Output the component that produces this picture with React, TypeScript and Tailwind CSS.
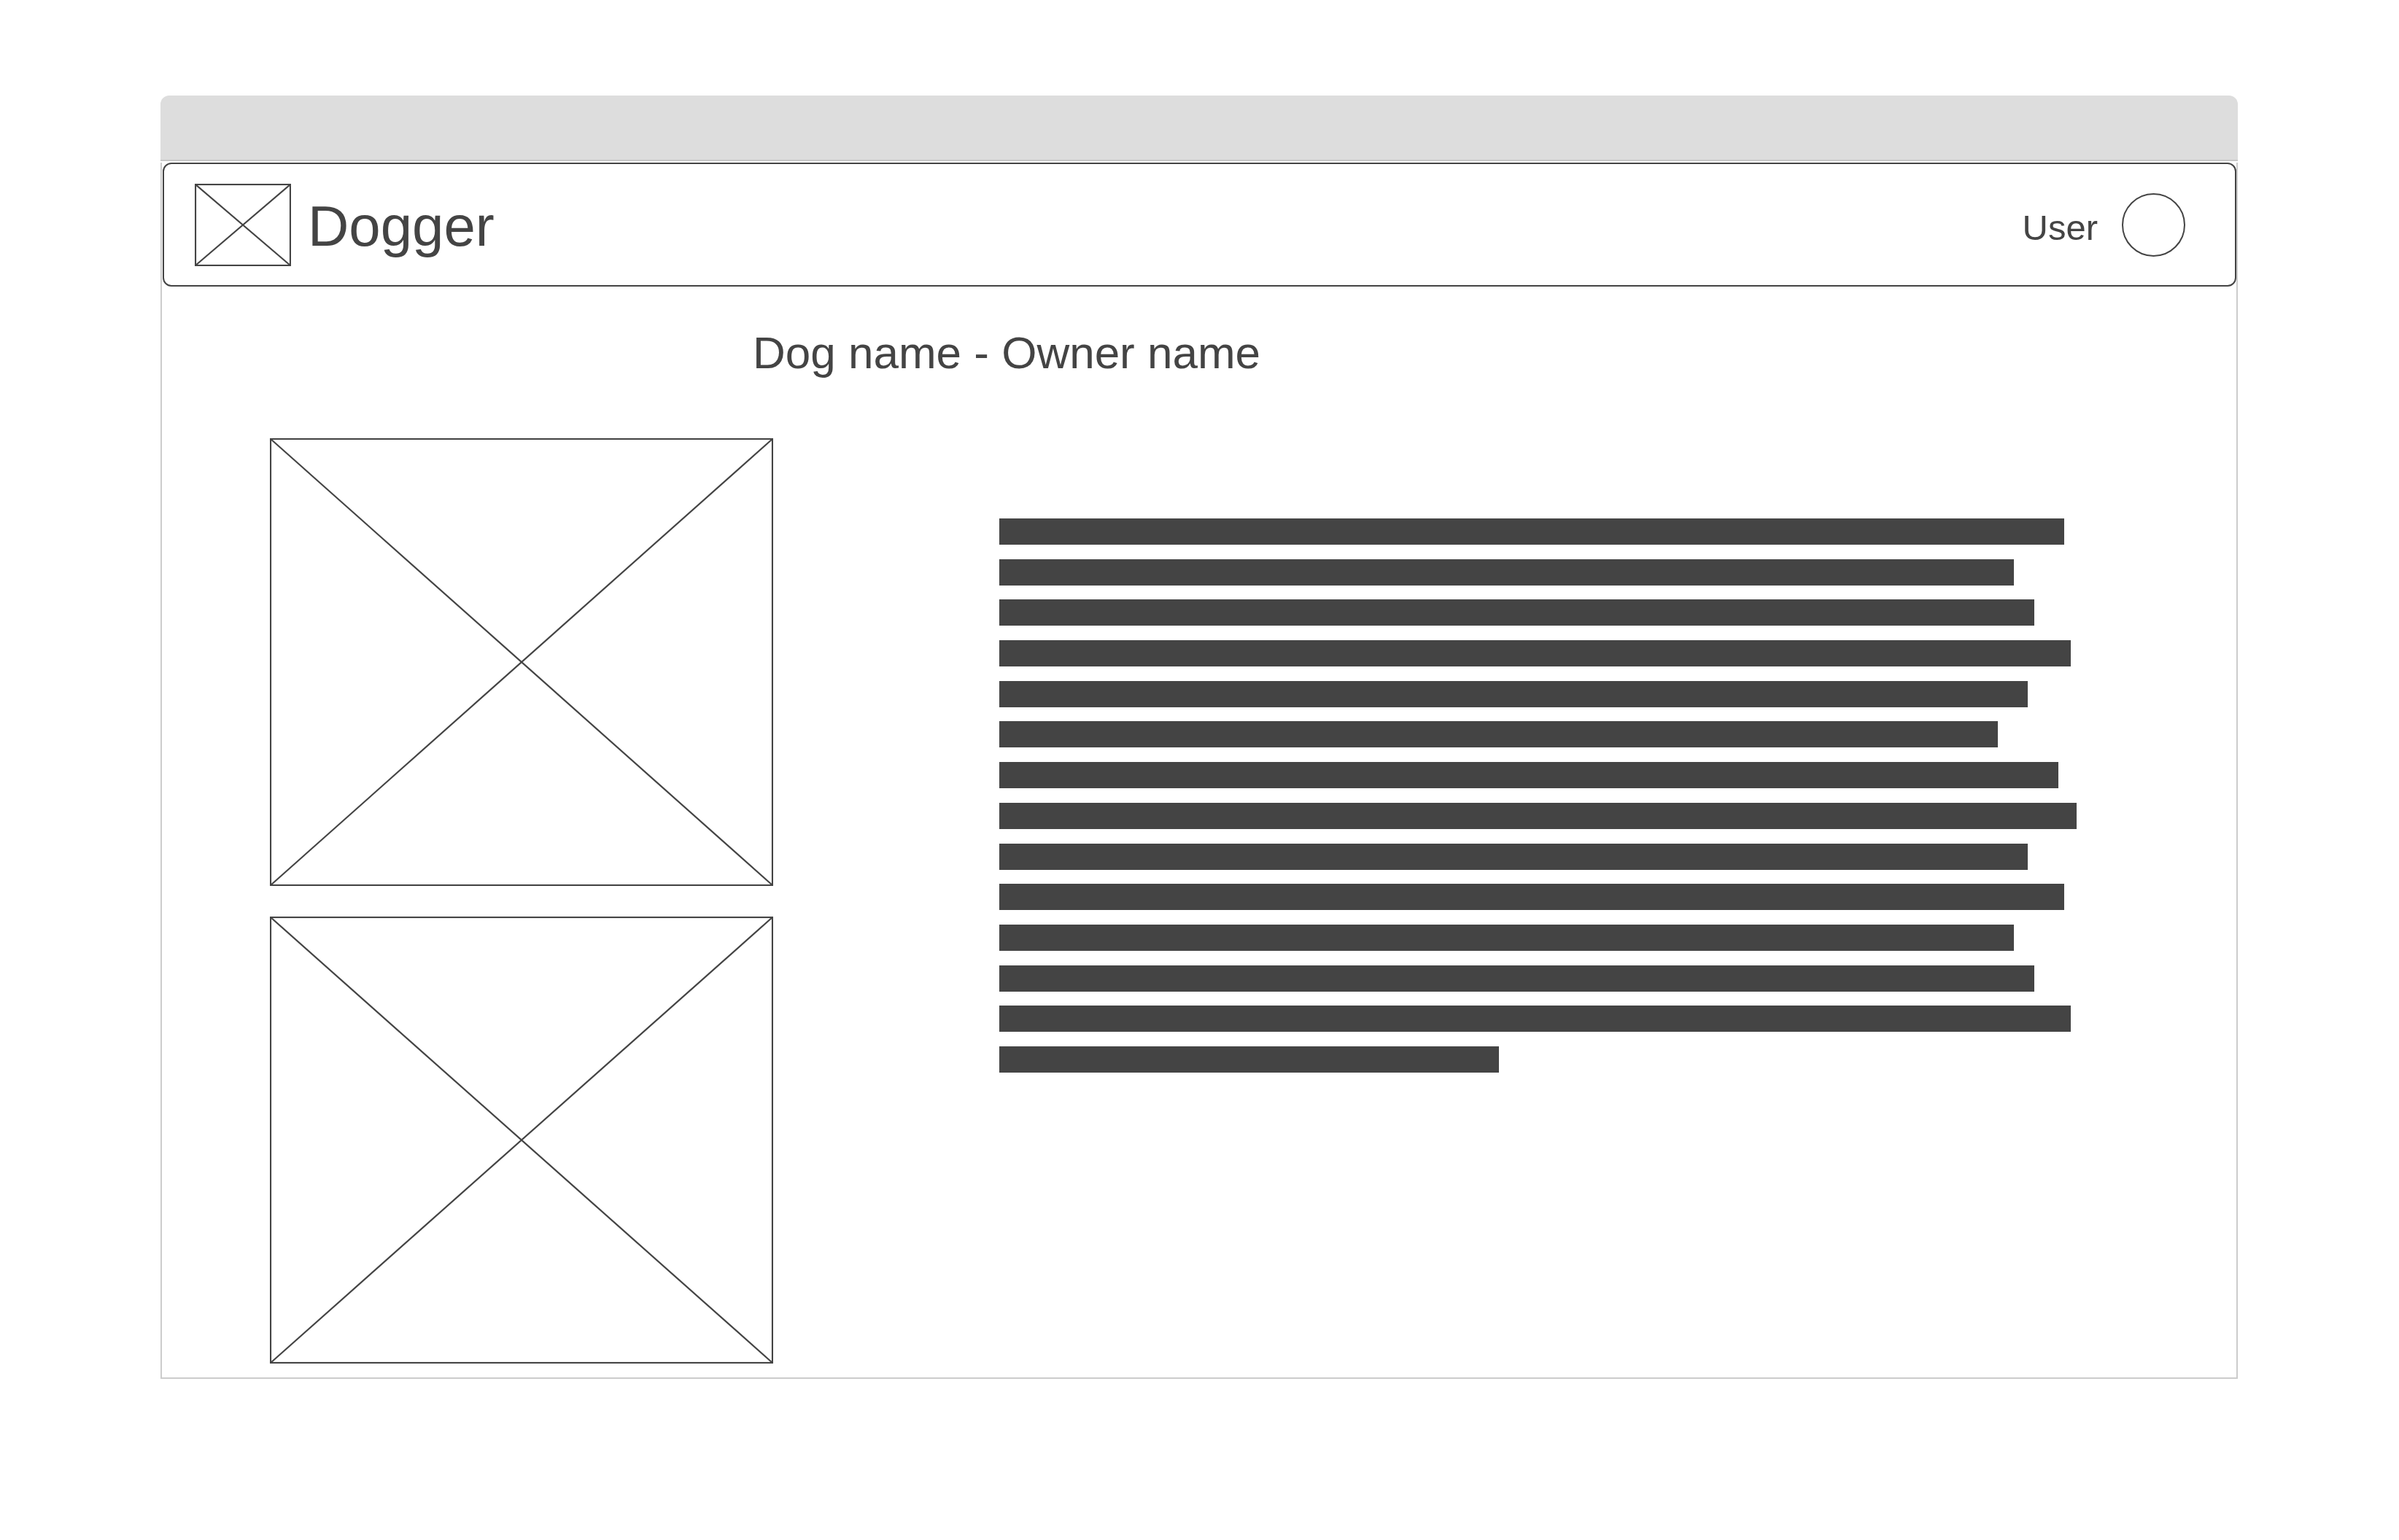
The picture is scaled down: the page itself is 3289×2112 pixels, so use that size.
import React from "react";

const textBars = [
  "w-[1460px]",
  "w-[1391px]",
  "w-[1419px]",
  "w-[1469px]",
  "w-[1410px]",
  "w-[1369px]",
  "w-[1452px]",
  "w-[1477px]",
  "w-[1410px]",
  "w-[1460px]",
  "w-[1391px]",
  "w-[1419px]",
  "w-[1469px]",
  "w-[685px]",
];

const Placeholder: React.FC<{ width: number; height: number }> = ({ width, height }) => (
  <svg width={width} height={height} viewBox={`0 0 ${width} ${height}`} className="block shrink-0">
    <rect x={1} y={1} width={width - 2} height={height - 2} fill="white" stroke="#444444" strokeWidth={2.2} />
    <line x1={1} y1={1} x2={width - 1} y2={height - 1} stroke="#444444" strokeWidth={2.2} />
    <line x1={width - 1} y1={1} x2={1} y2={height - 1} stroke="#444444" strokeWidth={2.2} />
  </svg>
);

const Header: React.FC = () => (
  <div className="mt-[2px] flex h-[170px] items-center justify-between rounded-[12px] border-2 border-[#444444] pl-[42px] pr-[68px]">
    <div className="flex items-center gap-[23px]">
      <Placeholder width={132} height={113} />
      <span className="mt-[4px] text-[78px] leading-none text-[#444444]">Dogger</span>
    </div>
    <div className="flex items-center gap-[33px]">
      <span className="mt-[9px] text-[49px] leading-none text-[#444444]">User</span>
      <div className="h-[87px] w-[87px] rounded-full border-2 border-[#444444]" />
    </div>
  </div>
);

export default function App() {
  return (
    <div className="min-h-screen bg-white pl-[220px] pt-[131px] font-['Liberation_Sans',Arial,sans-serif]">
      <div className="w-[2848px]">
        {/* window chrome */}
        <div className="h-[90px] rounded-t-[12px] border-b-2 border-[#c8c8c8] bg-[#dddddd]" />

        <div className="h-[1668px] border-x-2 border-b-2 border-[#cccccc] pl-px">
          <Header />

          <h1 className="mt-[60px] pl-[809px] text-[62px] leading-none font-normal text-[#444444]">
            Dog name - Owner name
          </h1>

          <div className="mt-[86px] flex pl-[147px]">
            <div className="flex flex-col gap-[42px]">
              <Placeholder width={690} height={614} />
              <Placeholder width={690} height={613} />
            </div>

            <div className="ml-[310px] mt-[110px] flex flex-col gap-[19.7px]">
              {textBars.map((w, i) => (
                <div key={i} className={`h-[36px] bg-[#444444] ${w}`} />
              ))}
            </div>
          </div>
        </div>
      </div>
    </div>
  );
}
